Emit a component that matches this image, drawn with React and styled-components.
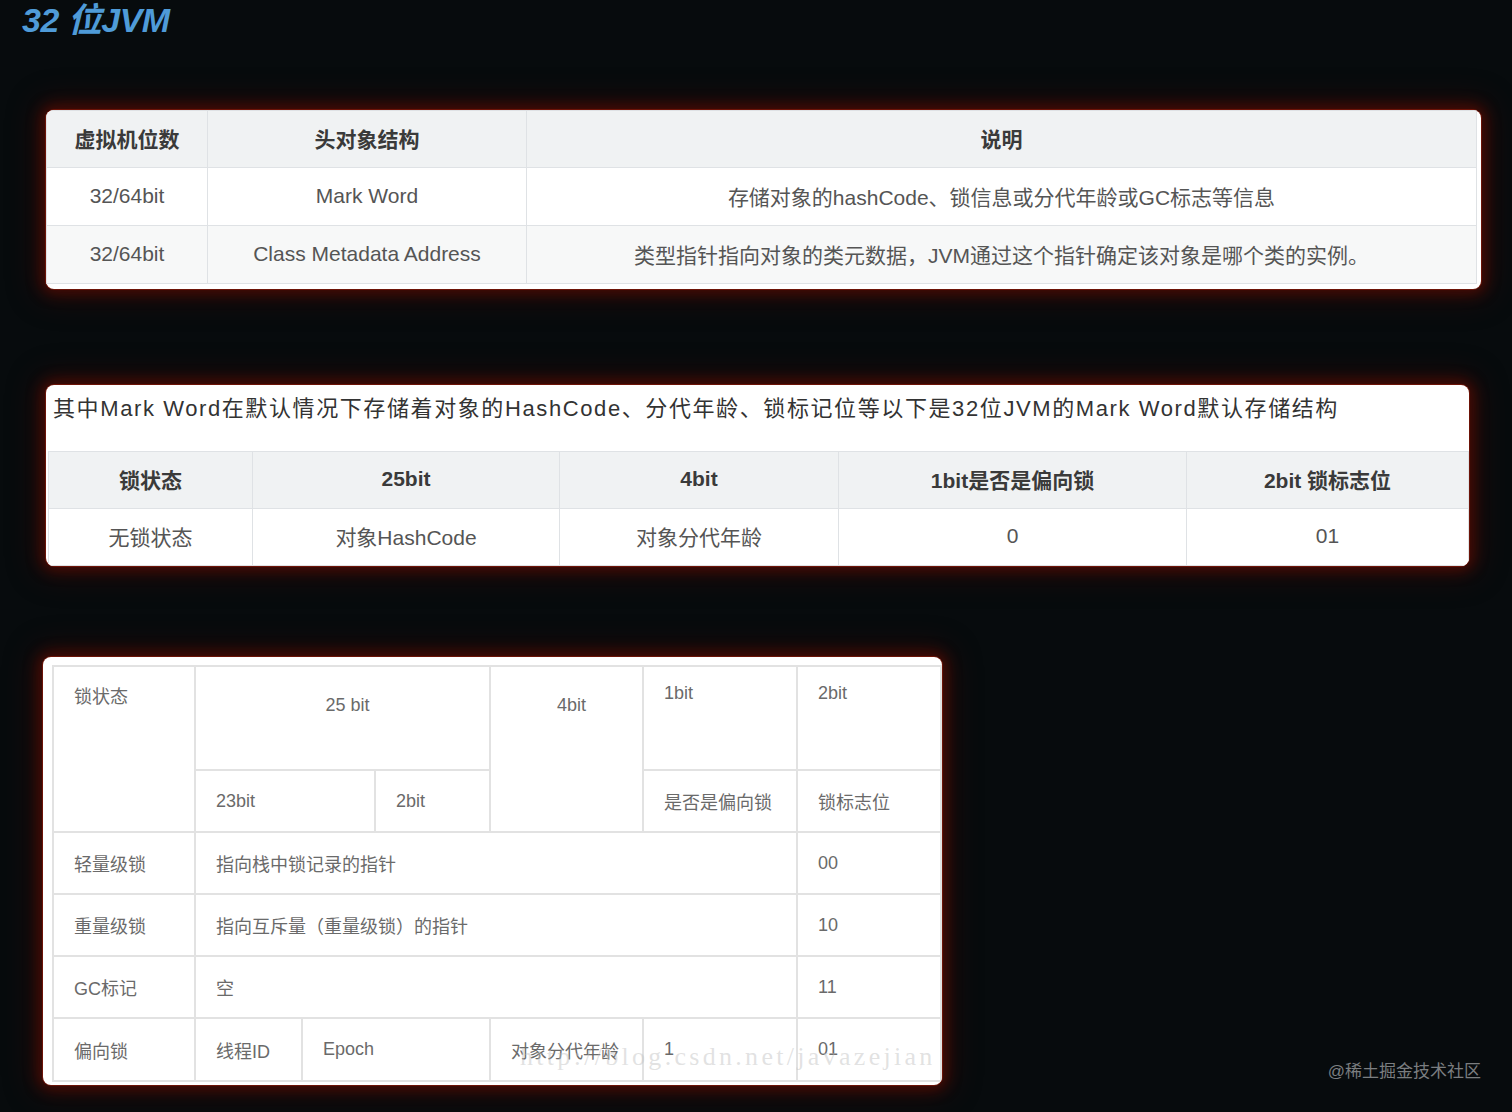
import React from 'react';
import styled, { createGlobalStyle } from 'styled-components';

const GlobalStyle = createGlobalStyle`
  html, body {
    margin: 0;
    padding: 0;
    background: #070b0d;
  }
  body {
    font-family: "Liberation Sans", "Noto Sans CJK SC", sans-serif;
  }
`;

const Page = styled.div`
  width: 1512px;
  height: 1112px;
  overflow: hidden;
  display: flex;
  flex-direction: column;
`;

const Title = styled.h1`
  margin: 0 0 0 22px;
  font-size: 34px;
  line-height: 40px;
  font-style: italic;
  font-weight: 700;
  color: #4f9bd8;
  letter-spacing: -0.5px;
`;

const Card = styled.div`
  background: #fff;
  border-radius: 8px;
  overflow: hidden;
  box-sizing: border-box;
  width: ${p => p.$width}px;
  margin: ${p => p.$top}px 0 0 ${p => p.$left}px;
  padding: ${p => p.$pad || '0'};
  box-shadow: 0 0 0 1px rgba(150, 28, 10, 0.55), 0 0 14px 5px rgba(105, 14, 4, 0.6),
    0 0 30px 10px rgba(60, 8, 2, 0.45);
`;

const Table = styled.table`
  border-collapse: collapse;
  table-layout: fixed;
  width: ${p => p.$width}px;
`;

const Row = styled.tr`
  height: ${p => p.$h}px;
  background: ${p => p.$bg || '#fff'};
`;

const Th = styled.th`
  border: 1px solid #dfe2e5;
  font-size: 21px;
  font-weight: 600;
  color: #3a3a3a;
  text-align: center;
  padding: 0 10px 3px;
`;

const Td = styled.td`
  border: 1px solid #dfe2e5;
  font-size: 21px;
  color: #555;
  text-align: center;
  padding: 0 10px 2px;
  white-space: nowrap;
`;

const Lead = styled.p`
  margin: 7px 0 26px 5px;
  font-size: 22px;
  line-height: 33px;
  letter-spacing: 1.6px;
  color: #333;
  white-space: nowrap;
`;

const Bottom = styled.div`
  display: flex;
  align-items: flex-end;
  justify-content: space-between;
`;

const LayoutWrap = styled.div`
  position: relative;
`;

const OldCell = styled.td`
  border: 2px solid #e2e2e2;
  font-size: 18px;
  color: #6a6a6a;
  text-align: ${p => (p.$center ? 'center' : 'left')};
  vertical-align: ${p => (p.$pt != null ? 'top' : 'middle')};
  padding: ${p => (p.$pt != null ? `${p.$pt}px` : '0')} 10px 0 20px;
  white-space: nowrap;
`;

const Watermark = styled.div`
  position: absolute;
  left: 468px;
  top: 377px;
  font-family: "Liberation Serif", serif;
  font-size: 26px;
  letter-spacing: 3.3px;
  color: rgba(190, 190, 190, 0.45);
  pointer-events: none;
  white-space: nowrap;
`;

const Credit = styled.div`
  margin: 0 31px 3px 0;
  font-size: 17px;
  color: #7b7e80;
`;

const headers1 = ['虚拟机位数', '头对象结构', '说明'];
const rows1 = [
  ['32/64bit', 'Mark Word', '存储对象的hashCode、锁信息或分代年龄或GC标志等信息'],
  ['32/64bit', 'Class Metadata Address', '类型指针指向对象的类元数据，JVM通过这个指针确定该对象是哪个类的实例。'],
];

const headers2 = ['锁状态', '25bit', '4bit', '1bit是否是偏向锁', '2bit 锁标志位'];
const row2 = ['无锁状态', '对象HashCode', '对象分代年龄', '0', '01'];

const pointerRows = [
  ['轻量级锁', '指向栈中锁记录的指针', '00'],
  ['重量级锁', '指向互斥量（重量级锁）的指针', '10'],
  ['GC标记', '空', '11'],
];

export default function App() {
  return (
    <Page>
      <GlobalStyle />
      <Title>32 位JVM</Title>

      <Card $width={1435} $top={70} $left={46} $pad="0 4px 5px 0">
        <Table $width={1431}>
          <colgroup>
            <col style={{ width: 161 }} />
            <col style={{ width: 319 }} />
            <col />
          </colgroup>
          <thead>
            <Row $h={57} $bg="#f0f2f3">
              {headers1.map(h => (
                <Th key={h}>{h}</Th>
              ))}
            </Row>
          </thead>
          <tbody>
            {rows1.map((r, i) => (
              <Row key={i} $h={58} $bg={i === 1 ? '#f7f8f8' : '#fff'}>
                {r.map((c, j) => (
                  <Td key={j}>{c}</Td>
                ))}
              </Row>
            ))}
          </tbody>
        </Table>
      </Card>

      <Card $width={1423} $top={96} $left={46} $pad="0 0 0 2px">
        <Lead>其中Mark Word在默认情况下存储着对象的HashCode、分代年龄、锁标记位等以下是32位JVM的Mark Word默认存储结构</Lead>
        <Table $width={1421}>
          <colgroup>
            <col style={{ width: 204 }} />
            <col style={{ width: 307 }} />
            <col style={{ width: 279 }} />
            <col style={{ width: 348 }} />
            <col />
          </colgroup>
          <thead>
            <Row $h={57} $bg="#f0f2f3">
              {headers2.map(h => (
                <Th key={h}>{h}</Th>
              ))}
            </Row>
          </thead>
          <tbody>
            <Row $h={57}>
              {row2.map((c, j) => (
                <Td key={j}>{c}</Td>
              ))}
            </Row>
          </tbody>
        </Table>
      </Card>

      <Bottom>
        <Card $width={899} $top={91} $left={43} $pad="8px 2px 3px 9px">
          <LayoutWrap>
            <Table $width={888}>
              <colgroup>
                <col style={{ width: 142 }} />
                <col style={{ width: 107 }} />
                <col style={{ width: 73 }} />
                <col style={{ width: 115 }} />
                <col style={{ width: 153 }} />
                <col style={{ width: 154 }} />
                <col style={{ width: 144 }} />
              </colgroup>
              <tbody>
                <Row $h={104}>
                  <OldCell rowSpan={2} $pt={15}>锁状态</OldCell>
                  <OldCell colSpan={3} $pt={28} $center>25 bit</OldCell>
                  <OldCell rowSpan={2} $pt={28} $center>4bit</OldCell>
                  <OldCell $pt={16}>1bit</OldCell>
                  <OldCell $pt={16}>2bit</OldCell>
                </Row>
                <Row $h={62}>
                  <OldCell colSpan={2}>23bit</OldCell>
                  <OldCell>2bit</OldCell>
                  <OldCell>是否是偏向锁</OldCell>
                  <OldCell>锁标志位</OldCell>
                </Row>
                {pointerRows.map(r => (
                  <Row key={r[0]} $h={62}>
                    <OldCell>{r[0]}</OldCell>
                    <OldCell colSpan={5}>{r[1]}</OldCell>
                    <OldCell>{r[2]}</OldCell>
                  </Row>
                ))}
                <Row $h={63}>
                  <OldCell>偏向锁</OldCell>
                  <OldCell>线程ID</OldCell>
                  <OldCell colSpan={2}>Epoch</OldCell>
                  <OldCell>对象分代年龄</OldCell>
                  <OldCell>1</OldCell>
                  <OldCell>01</OldCell>
                </Row>
              </tbody>
            </Table>
            <Watermark>http://blog.csdn.net/javazejian</Watermark>
          </LayoutWrap>
        </Card>
        <Credit>@稀土掘金技术社区</Credit>
      </Bottom>
    </Page>
  );
}
